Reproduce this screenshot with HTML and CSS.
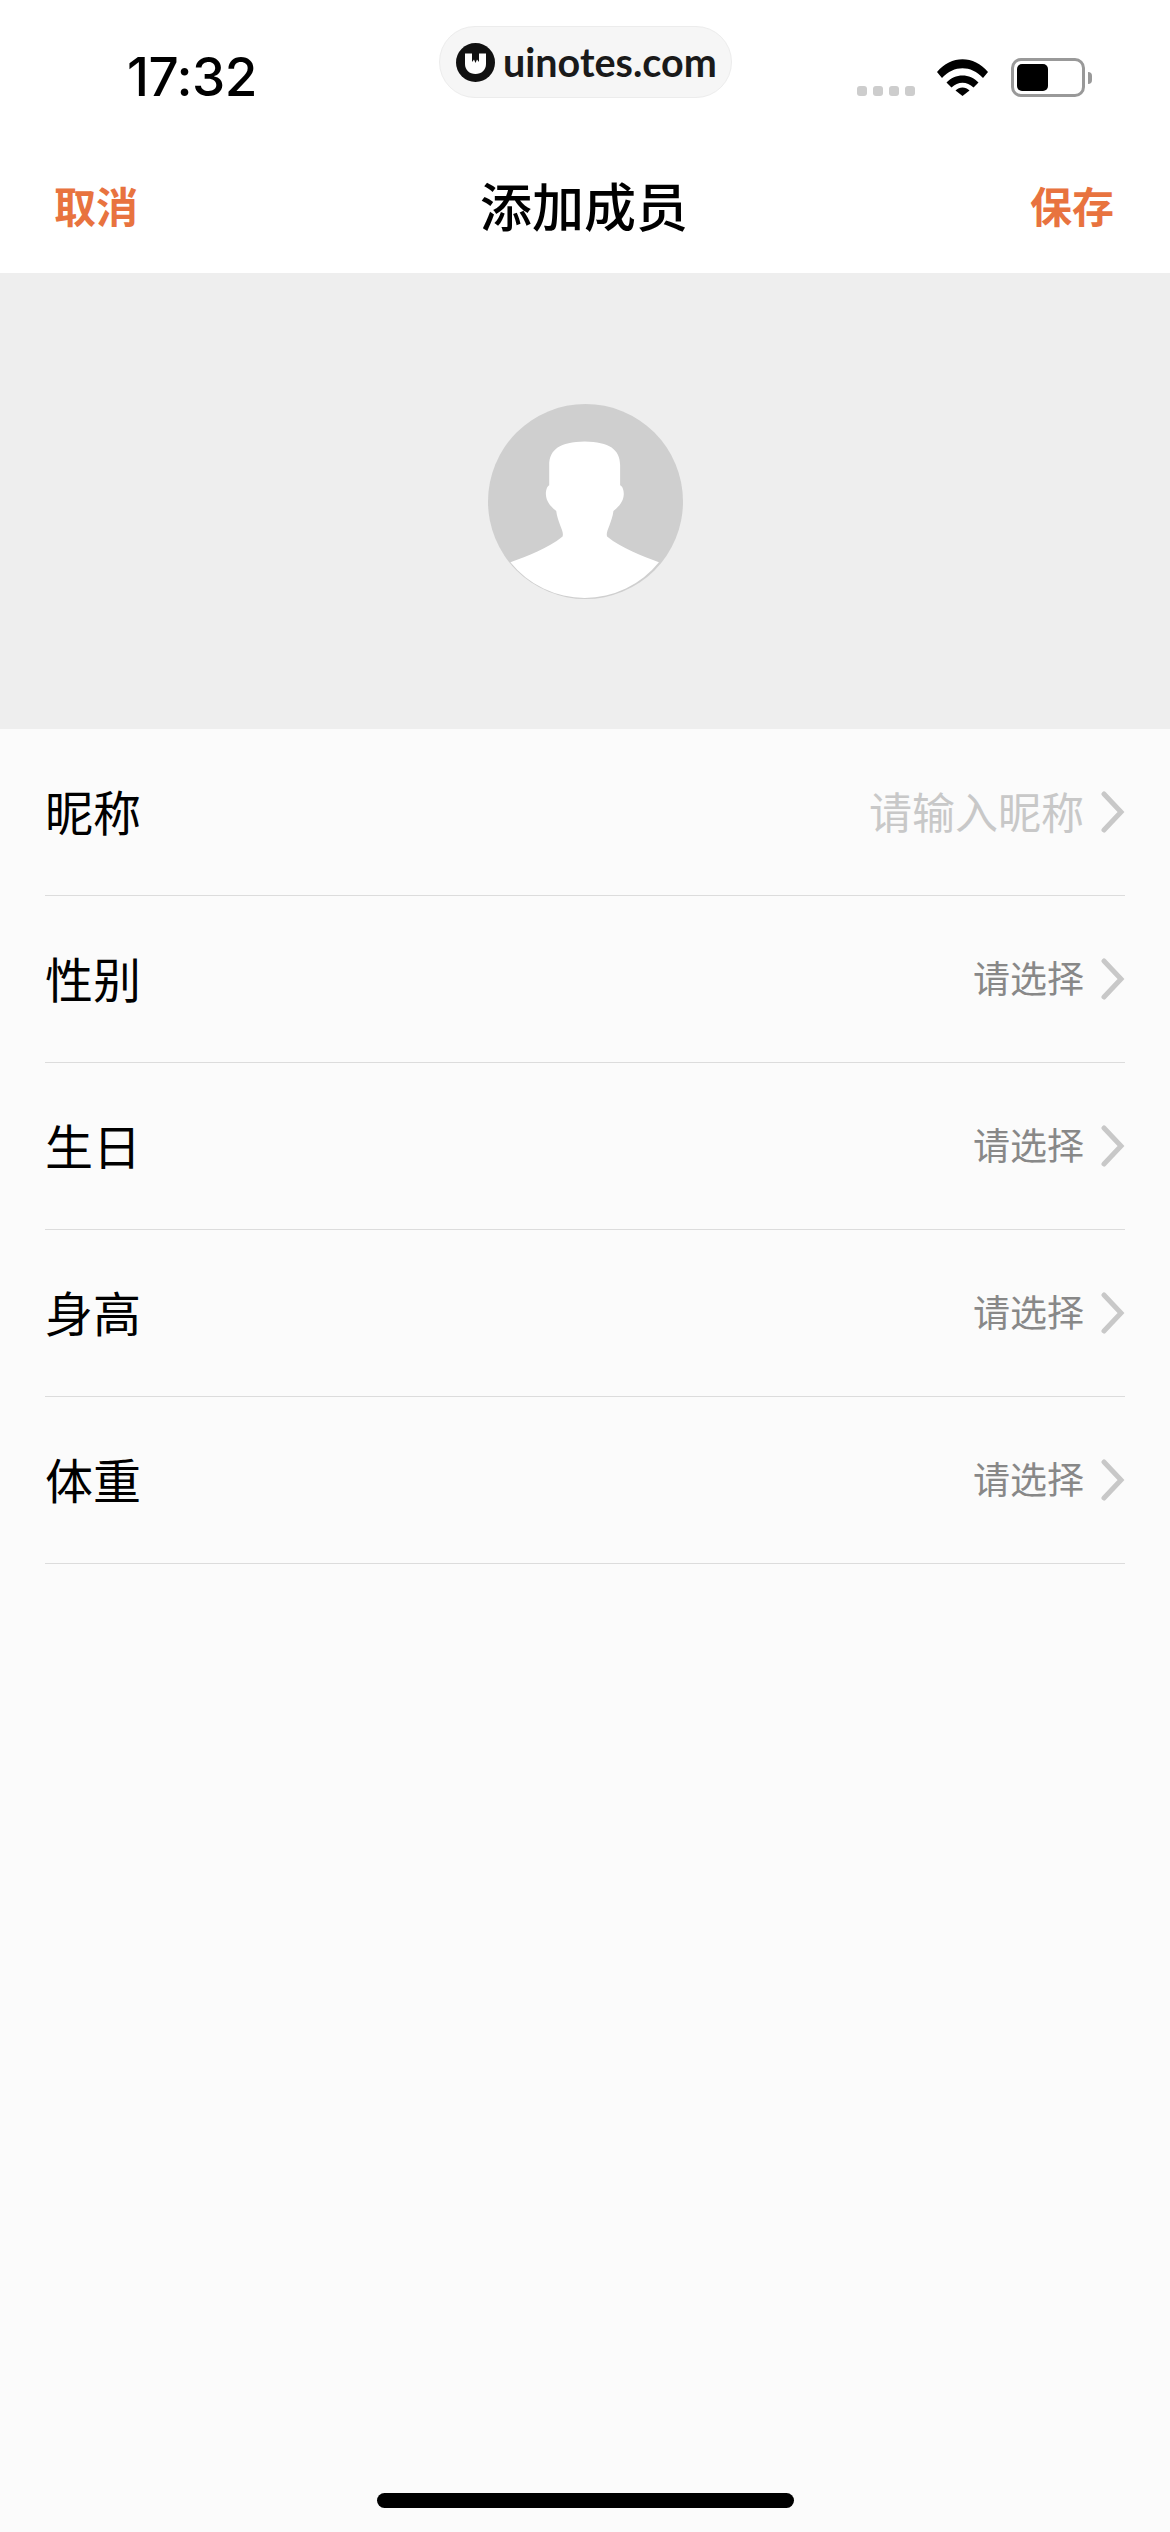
FILE: index.html
```html
<!DOCTYPE html>
<html lang="zh">
<head>
<meta charset="utf-8">
<title>添加成员</title>
<link rel="stylesheet" href="styles.css">
</head>
<body>
<div class="screen">
  <header class="top">
    <div class="status">
      <span class="time">17:32</span>
      <div class="status-icons">
        <div class="signal"><i></i><i></i><i></i><i></i></div>
        <svg class="wifi" viewBox="0 0 51 37"><path d="M0 13C14-4 37-4 51 13L46 19C34 6 17 6 5 19Z"/><path d="M9.5 23.500C18 14 33 14 41.500 23.500L36.500 28.500C30 22 21 22 14.500 28.500Z"/><path d="M18.500 31.500C22.500 27.500 28.500 27.500 32.500 31.500L25.500 37Z"/></svg>
        <div class="battery"><div class="battery-body"><div class="battery-level"></div></div><div class="battery-nub"></div></div>
      </div>
    </div>
    <nav class="nav">
      <span class="nav-action">取消</span>
      <h1 class="nav-title">添加成员</h1>
      <span class="nav-action">保存</span>
    </nav>
  </header>

  <div class="watermark">
    <svg class="wm-logo" viewBox="0 0 39 39"><circle cx="19.500" cy="19.500" r="19.500" fill="#111"/><path d="M9 10.500H16V13L18 15H21L23 13V10.500H30V21C30 27 25.500 31 19.500 31C13.500 31 9 27 9 21Z" fill="#fff"/><path d="M16 10.500H23V19L21 16.500L19.500 20L18 16.500L16 19Z" fill="#111"/></svg>
    <span class="wm-text">uinotes.com</span>
  </div>

  <section class="hero">
    <svg class="avatar" viewBox="85 42 583 583">
      <circle cx="376.500" cy="333.500" r="291.500" fill="#cfcfcf"/>
      <path fill="#fff" d="M152 515C205 495 262 475 308 438C311 428 306 418 301 405C296 392 291 378 289 362C274 350 259 335 258 312C258 298 262 288 268 285L268 225C268 178 300 155 374 154C448 155 480 178 480 225L480 285C487 288 491 298 491 312C490 335 475 350 460 362C458 378 453 392 448 405C443 418 438 428 441 438C487 475 545 495 596 515A284 284 0 0 1 152 515Z"/>
    </svg>
  </section>

  <main class="list">
    <div class="row"><span class="row-label">昵称</span><div class="row-end"><span class="placeholder">请输入昵称</span><svg class="chev" viewBox="0 0 24 42"><path d="M3 3L20 21L3 39"/></svg></div></div>
    <div class="row"><span class="row-label">性别</span><div class="row-end"><span class="pick">请选择</span><svg class="chev" viewBox="0 0 24 42"><path d="M3 3L20 21L3 39"/></svg></div></div>
    <div class="row"><span class="row-label">生日</span><div class="row-end"><span class="pick">请选择</span><svg class="chev" viewBox="0 0 24 42"><path d="M3 3L20 21L3 39"/></svg></div></div>
    <div class="row"><span class="row-label">身高</span><div class="row-end"><span class="pick">请选择</span><svg class="chev" viewBox="0 0 24 42"><path d="M3 3L20 21L3 39"/></svg></div></div>
    <div class="row"><span class="row-label">体重</span><div class="row-end"><span class="pick">请选择</span><svg class="chev" viewBox="0 0 24 42"><path d="M3 3L20 21L3 39"/></svg></div></div>
  </main>

  <div class="home-bar"><div class="home-indicator"></div></div>
</div>
</body>
</html>
```

FILE: styles.css
```css
* { box-sizing: border-box; }
html, body { margin: 0; padding: 0; }
body { font-family: "Noto Sans CJK SC", "Noto Sans", sans-serif; background: #fbfbfb; }
.screen { position: relative; width: 1170px; height: 2532px; display: flex; flex-direction: column; overflow: hidden; background: #fbfbfb; }

.top { height: 273px; background: #fff; flex: none; display: flex; flex-direction: column; }
.status { height: 138px; padding: 48px 78px 0 127px; display: flex; justify-content: space-between; align-items: flex-start; flex: none; }
.time { font-family: Inter, "Liberation Sans", sans-serif; font-size: 53px; font-weight: 500; line-height: 58px; color: #000; letter-spacing: -0.500px; }
.status-icons { display: flex; align-items: flex-start; padding-top: 10px; }
.signal { display: flex; gap: 5.500px; margin-top: 28px; margin-right: 22px; }
.signal i { display: block; width: 10.500px; height: 10px; border-radius: 3px; background: #cdcdcd; }
.wifi { width: 51px; height: 37px; fill: #000; display: block; margin-top: 1px; margin-right: 23px; }
.battery { display: flex; align-items: center; }
.battery-body { width: 74px; height: 39px; border: 3px solid #999; border-radius: 10px; padding: 3px 0 3px 3px; background: #fff; }
.battery-level { width: 31px; height: 27px; border-radius: 5px; background: #000; }
.battery-nub { width: 4px; height: 12px; margin-left: 3px; background: #999; border-radius: 0 6px 6px 0; }

.nav { flex: 1; display: flex; justify-content: space-between; align-items: center; padding: 0 56px 2px 54px; }
.nav-action { font-size: 42px; font-weight: 700; line-height: 60px; color: #e8733f; }
.nav-title { margin: 0; font-size: 52px; font-weight: 500; line-height: 70px; color: #000; }

.watermark { position: absolute; left: 439px; top: 26px; width: 293px; height: 72px; display: flex; align-items: center; gap: 8px; padding-left: 16px; background: #f6f6f6; border: 1px solid #ececec; border-radius: 36px; }
.wm-logo { width: 39px; height: 39px; flex: none; }
.wm-text { font-family: Lato, "Noto Sans", sans-serif; font-size: 39.500px; font-weight: 700; color: #1a1a1a; line-height: 44px; }

.hero { height: 456px; flex: none; background: #eee; display: flex; align-items: center; justify-content: center; }
.avatar { width: 195px; height: 195px; display: block; }

.list { flex: none; display: flex; flex-direction: column; padding: 0 45px; }
.row { height: 167px; display: flex; align-items: center; justify-content: space-between; border-bottom: 1.500px solid #dcdcdc; }
.row-label { font-size: 48px; line-height: 60px; color: #000; padding: 0 0 4px 0; }
.row-end { display: flex; align-items: center; gap: 17px; }
.placeholder { font-size: 43px; line-height: 60px; color: #c8c8c8; padding-bottom: 4px; }
.pick { font-size: 37px; line-height: 60px; color: #888; padding-bottom: 4px; }
.chev { width: 24px; height: 42px; display: block; fill: none; stroke: #c8c8c8; stroke-width: 5px; stroke-linecap: round; stroke-linejoin: miter; }

.home-bar { margin-top: auto; height: 39px; flex: none; display: flex; justify-content: center; }
.home-indicator { width: 417px; height: 15px; border-radius: 8px; background: #000; }
```
